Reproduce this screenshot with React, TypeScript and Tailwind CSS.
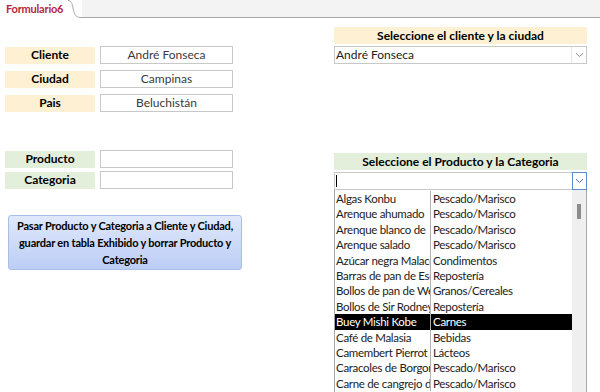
import React from "react";

const productos: Array<[string, string]> = [
  ["Algas Konbu", "Pescado/Marisco"],
  ["Arenque ahumado", "Pescado/Marisco"],
  ["Arenque blanco de", "Pescado/Marisco"],
  ["Arenque salado", "Pescado/Marisco"],
  ["Azúcar negra Malacca", "Condimentos"],
  ["Barras de pan de Escocia", "Repostería"],
  ["Bollos de pan de Wessex", "Granos/Cereales"],
  ["Bollos de Sir Rodney's", "Repostería"],
  ["Buey Mishi Kobe", "Carnes"],
  ["Café de Malasia", "Bebidas"],
  ["Camembert Pierrot", "Lácteos"],
  ["Caracoles de Borgoña", "Pescado/Marisco"],
  ["Carne de cangrejo de Boston", "Pescado/Marisco"],
];

function Label({ text, tone }: { text: string; tone: "orange" | "green" }) {
  return (
    <div
      className={`w-[90px] h-[17px] flex items-center justify-center font-bold text-[12px] text-black ${
        tone === "orange" ? "bg-[#fdf0d3]" : "bg-[#e3efdb]"
      }`}
    >
      {text}
    </div>
  );
}

function ValueBox({ value }: { value?: string }) {
  return (
    <div className="w-[133px] h-[18px] border border-[#c8c8c8] bg-white flex items-center justify-center text-[12px] text-[#3a3a3a]">
      {value}
    </div>
  );
}

function Chevron({ color }: { color: string }) {
  return (
    <svg width="9" height="6" viewBox="0 0 9 6">
      <path d="M1 1.2 L4.5 4.5 L8 1.2" fill="none" stroke={color} strokeWidth="1" />
    </svg>
  );
}

export default function App() {
  return (
    <div className="w-[600px] h-[392px] bg-white overflow-hidden font-['Lato','Open_Sans',sans-serif] relative">
      {/* tab strip */}
      <div className="h-[18px] flex bg-[#f3f3f3]">
        <div className="flex items-center pl-[6px] pr-[3px] bg-white text-[11px] font-bold tracking-[-0.2px] text-[#b4283a]">
          Formulario6
        </div>
        <svg width="16" height="18" viewBox="0 0 16 18" className="bg-white">
          <path d="M0 0 L2 0 C5 0 6 3 7 8 C8 13 9 17 14 17 L16 17 L16 18 L0 18 Z" fill="white" />
          <path d="M2 0.5 C5 0.5 6 3 7 8 C8 13 9 17 14 17.5 L16 17.5" fill="none" stroke="#a8a8a8" strokeWidth="1" />
        </svg>
        <div className="flex-1 border-b border-[#a8a8a8]" />
      </div>

      <div className="flex">
        {/* left column */}
        <div className="w-[334px] pl-[5px] pt-[28px]">
          <div className="flex flex-col gap-[6px]">
            {[
              ["Cliente", "André Fonseca"],
              ["Ciudad", "Campinas"],
              ["Pais", "Beluchistán"],
            ].map(([l, v]) => (
              <div key={l} className="flex items-center gap-[5px]">
                <Label text={l} tone="orange" />
                <ValueBox value={v} />
              </div>
            ))}
          </div>

          <div className="flex flex-col gap-[3px] mt-[38px]">
            {["Producto", "Categoria"].map((l) => (
              <div key={l} className="flex items-center gap-[5px]">
                <Label text={l} tone="green" />
                <ValueBox />
              </div>
            ))}
          </div>

          <button className="mt-[26px] ml-[3px] w-[234px] h-[55px] rounded-[3px] border border-[#a9bde6] bg-gradient-to-b from-[#e0e9fb] to-[#bccdf5] flex items-center justify-center text-center font-bold text-[11px] tracking-[-0.2px] leading-[17px] text-black px-[2px]">
            Pasar Producto y Categoria a Cliente y Ciudad, guardar en tabla Exhibido y borrar Producto y Categoria
          </button>
        </div>

        {/* right column */}
        <div className="w-[253px] pt-[9px]">
          <div className="h-[17px] bg-[#fdf0d3] flex items-center justify-center font-bold text-[12px] text-black">
            Seleccione el cliente y la ciudad
          </div>
          <div className="mt-[2px] h-[18px] border border-[#c8c8c8] bg-white flex items-center">
            <div className="flex-1 pl-[1px] text-[12px] text-[#222]">André Fonseca</div>
            <div className="w-[15px] h-full border-l border-[#e6e6e6] flex items-center justify-center">
              <Chevron color="#8a8a8a" />
            </div>
          </div>

          <div className="mt-[89px] h-[17px] bg-[#e3efdb] flex items-center justify-center font-bold text-[12px] text-black">
            Seleccione el Producto y la Categoria
          </div>
          <div className="mt-[2px] h-[18px] border border-[#c8c8c8] bg-white flex items-center">
            <div className="flex-1 pl-[1px] flex items-center">
              <div className="w-px h-[12px] bg-black" />
            </div>
            <div className="w-[15px] h-[18px] -mr-px border border-[#5a8ed0] bg-white flex items-center justify-center">
              <Chevron color="#4a72a8" />
            </div>
          </div>

          {/* drop-down list */}
          <div className="h-[210px] flex border-x border-[#a8a8a8] bg-white">
            <div className="flex-1 pt-[1px]">
              {productos.map(([p, c], i) => {
                const sel = i === 8;
                return (
                  <div
                    key={p}
                    className={`h-[15.4px] flex text-[11.5px] tracking-[-0.3px] leading-[15.4px] ${sel ? "bg-black text-white" : "text-[#222]"}`}
                  >
                    <div className="w-[96px] pl-[1px] overflow-hidden whitespace-nowrap border-r border-[#b0b0b0]">{p}</div>
                    <div className="flex-1 pl-[2px] whitespace-nowrap">{c}</div>
                  </div>
                );
              })}
            </div>
            <div className="w-[14px] bg-[#efefef] flex justify-center pt-[14px]">
              <div className="w-[4px] h-[15px] bg-[#8c8c8c]" />
            </div>
          </div>
        </div>
      </div>
    </div>
  );
}
